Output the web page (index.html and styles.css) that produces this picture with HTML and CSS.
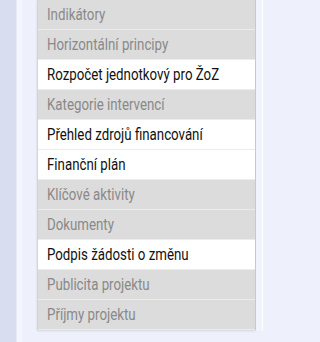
FILE: index.html
```html
<!DOCTYPE html>
<html lang="cs">
<head>
<meta charset="utf-8">
<link rel="stylesheet" href="styles.css">
</head>
<body>
<div class="page">
  <div class="strip"></div>
  <div class="gutter"></div>
  <div class="panel">
    <ul class="menu">
      <li class="item off"><span>Indikátory</span></li>
      <li class="item off"><span>Horizontální principy</span></li>
      <li class="item on"><span>Rozpočet jednotkový pro ŽoZ</span></li>
      <li class="item off"><span>Kategorie intervencí</span></li>
      <li class="item on"><span>Přehled zdrojů financování</span></li>
      <li class="item on"><span>Finanční plán</span></li>
      <li class="item off"><span>Klíčové aktivity</span></li>
      <li class="item off"><span>Dokumenty</span></li>
      <li class="item on"><span>Podpis žádosti o změnu</span></li>
      <li class="item off"><span>Publicita projektu</span></li>
      <li class="item off"><span>Příjmy projektu</span></li>
    </ul>
    <div class="edge"></div>
  </div>
</div>
</body>
</html>
```
FILE: styles.css
```css
html, body {
  margin: 0;
  padding: 0;
  background: #eef1fb;
}
.page {
  display: flex;
  width: 267px;
  height: 342px;
  overflow: hidden;
}
.strip {
  width: 16px;
  background: #d8def0;
  border-right: 1px solid #e6eaf7;
}
.gutter {
  width: 5px;
  background: #f5f7fe;
}
.panel {
  flex: 1;
  display: flex;
  padding-left: 15px;
  background: #eef1fb;
}
.menu {
  list-style: none;
  margin: 0;
  padding: 0;
  width: 217px;
  align-self: flex-start;
  border-left: 1px solid #d4d4d4;
  border-right: 1px solid #c9c9c9;
  box-shadow: 0 1px 2px rgba(0,0,0,0.12);
}
.item {
  height: 29px;
  border-bottom: 1px solid #ececec;
  display: flex;
  align-items: center;
  padding-left: 9px;
  font-family: Roboto, "Liberation Sans", sans-serif;
  font-size: 16px;
  white-space: nowrap;
}
.item span {
  display: inline-block;
  transform: scaleX(0.83);
  transform-origin: left center;
}
.off {
  background: #dcdcdc;
  color: #898989;
}
.on {
  background: #ffffff;
  color: #111111;
}
.edge {
  width: 6px;
  border-right: 1px solid #ffffff;
  height: 331px;
  background: #f0f2fc;
}
```
